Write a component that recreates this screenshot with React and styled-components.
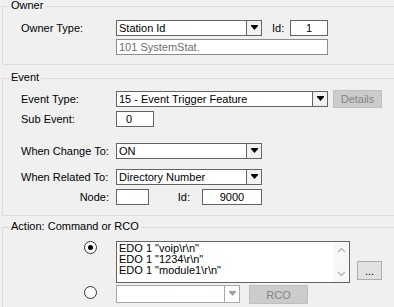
import React from "react";
import styled, { createGlobalStyle } from "styled-components";

const Global = createGlobalStyle`
  html, body { margin: 0; padding: 0; background: #f0f0f0; }
  body { font-family: "Liberation Sans", Arial, sans-serif; font-size: 11px; color: #000; overflow: hidden; }
  #root { width: 394px; height: 307px; overflow: hidden; }
`;

const Page = styled.div`
  display: flex;
  flex-direction: column;
  padding: 6px 0 0 2px;
`;

const Group = styled.div`
  position: relative;
  border: 1px solid #dcdcdc;
  border-right: none;
  margin-right: -20px;
  margin-top: ${(p) => p.$mt || 0}px;
  padding: ${(p) => p.$pt}px 0 ${(p) => p.$pb}px 18px;
  display: flex;
  flex-direction: column;
`;

const GroupTitle = styled.div`
  position: absolute;
  top: -8px;
  left: 6px;
  padding: 0 2px;
  line-height: 13px;
  background: #f0f0f0;
`;

const Row = styled.div`
  display: flex;
  align-items: ${(p) => p.$align || "center"};
  height: ${(p) => p.$h || 16}px;
  margin-top: ${(p) => p.$mt || 0}px;
`;

const Label = styled.div`
  width: ${(p) => p.$w || 95}px;
  flex: none;
  box-sizing: border-box;
  text-align: ${(p) => (p.$right ? "right" : "left")};
  padding-right: ${(p) => p.$pr || 0}px;
  padding-left: ${(p) => p.$pl || 0}px;
  line-height: 13px;
  white-space: nowrap;
`;

const Field = styled.div`
  box-sizing: border-box;
  width: ${(p) => p.$w}px;
  height: ${(p) => p.$h || 16}px;
  flex: none;
  background: #fff;
  border: 1px solid ${(p) => (p.$disabled ? "#8c8c8c" : "#646464")};
  color: ${(p) => (p.$disabled ? "#6d6d6d" : "#000")};
  line-height: 14px;
  padding-left: ${(p) => p.$pl ?? 2}px;
  text-align: ${(p) => (p.$center ? "center" : "left")};
  white-space: nowrap;
  overflow: hidden;
`;

const ComboBox = styled.div`
  box-sizing: border-box;
  width: ${(p) => p.$w}px;
  height: ${(p) => p.$h || 16}px;
  flex: none;
  display: flex;
  background: #fff;
  border: 1px solid ${(p) => (p.$disabled ? "#a8a8a8" : "#646464")};
`;

const ComboText = styled.div`
  flex: 1;
  padding-left: 2px;
  line-height: 14px;
  white-space: nowrap;
  overflow: hidden;
`;

const ComboArrow = styled.div`
  width: 14px;
  flex: none;
  display: flex;
  align-items: center;
  justify-content: center;
  border-left: 1px solid ${(p) => (p.$disabled ? "#a8a8a8" : "#646464")};
  background: ${(p) => (p.$disabled ? "#fff" : "#f2f2f2")};
`;

const Button = styled.div`
  box-sizing: border-box;
  width: ${(p) => p.$w}px;
  height: ${(p) => p.$h || 18}px;
  flex: none;
  margin-left: ${(p) => p.$ml || 0}px;
  margin-top: ${(p) => p.$mt || 0}px;
  align-self: ${(p) => p.$self || "auto"};
  display: flex;
  align-items: center;
  justify-content: center;
  background: ${(p) => (p.$disabled ? "#cccccc" : "#e1e1e1")};
  border: 1px solid ${(p) => (p.$disabled ? "#bfbfbf" : "#adadad")};
  color: ${(p) => (p.$disabled ? "#838383" : "#000")};
`;

const IdLabel = styled.div`
  box-sizing: border-box;
  width: ${(p) => p.$w}px;
  padding-left: ${(p) => p.$pl || 0}px;
  text-align: ${(p) => (p.$right ? "right" : "left")};
  padding-right: ${(p) => p.$pr || 0}px;
  flex: none;
  line-height: 13px;
`;

const RadioCell = styled.div`
  width: 95px;
  flex: none;
  box-sizing: border-box;
  padding-left: 63px;
  padding-top: ${(p) => p.$pt || 0}px;
  align-self: flex-start;
`;

const Radio = styled.div`
  box-sizing: border-box;
  width: 13px;
  height: 13px;
  border-radius: 50%;
  border: 1px solid #333;
  background: #fff;
  display: flex;
  align-items: center;
  justify-content: center;
  &::after {
    content: "";
    display: ${(p) => (p.$checked ? "block" : "none")};
    width: 5px;
    height: 5px;
    border-radius: 50%;
    background: #000;
  }
`;

const ListBox = styled.div`
  box-sizing: border-box;
  width: 234px;
  height: 42px;
  flex: none;
  display: flex;
  border: 1px solid #646464;
  background: #fff;
`;

const ListLines = styled.div`
  flex: 1;
  padding: 1px 0 0 2px;
  line-height: 11px;
  white-space: nowrap;
  overflow: hidden;
`;

const ScrollBar = styled.div`
  width: 16px;
  flex: none;
  display: flex;
  flex-direction: column;
  justify-content: space-between;
  align-items: center;
  padding: 5px 0 5px;
  background: #f7f7f7;
`;

const Arrow = ({ disabled }) => (
  <svg width="7" height="6" viewBox="0 0 7 6">
    <polygon points="0,0 7,0 7,1 3.5,5 0,1" fill={disabled ? "#a0a0a0" : "#000"} />
  </svg>
);

const Chevron = ({ up }) => (
  <svg width="9" height="6" viewBox="0 0 9 6">
    <polyline
      points={up ? "1,5 4.5,1.5 8,5" : "1,1 4.5,4.5 8,1"}
      fill="none"
      stroke="#b0b0b0"
      strokeWidth="1.2"
    />
  </svg>
);

const Combo = ({ w, h, text, disabled }) => (
  <ComboBox $w={w} $h={h} $disabled={disabled}>
    <ComboText>{text}</ComboText>
    <ComboArrow $disabled={disabled}>
      <Arrow disabled={disabled} />
    </ComboArrow>
  </ComboBox>
);

export default function App() {
  return (
    <>
      <Global />
      <Page>
        <Group $pt={13} $pb={9}>
          <GroupTitle>Owner</GroupTitle>
          <Row>
            <Label>Owner Type:</Label>
            <Combo w={146} text="Station Id" />
            <IdLabel $w={28} $pl={10}>Id:</IdLabel>
            <Field $w={38} $center $pl={0}>1</Field>
          </Row>
          <Row $mt={3}>
            <Label />
            <Field $w={212} $disabled>101 SystemStat.</Field>
          </Row>
        </Group>

        <Group $mt={13} $pt={11} $pb={10}>
          <GroupTitle>Event</GroupTitle>
          <Row $h={18}>
            <Label>Event Type:</Label>
            <Combo w={212} text="15 - Event Trigger Feature" />
            <Button $w={49} $ml={5} $disabled>Details</Button>
          </Row>
          <Row $mt={3}>
            <Label>Sub Event:</Label>
            <Field $w={38} $pl={9}>0</Field>
          </Row>
          <Row $mt={16}>
            <Label $pl={0}>When Change To:</Label>
            <Combo w={146} text="ON" />
          </Row>
          <Row $mt={10}>
            <Label>When Related To:</Label>
            <Combo w={146} text="Directory Number" />
          </Row>
          <Row $mt={4}>
            <Label $right $pr={7}>Node:</Label>
            <Field $w={33} />
            <IdLabel $w={53} $right $pr={12}>Id:</IdLabel>
            <Field $w={60} $center $pl={0}>9000</Field>
          </Row>
        </Group>

        <Group $mt={11} $pt={13} $pb={20}>
          <GroupTitle>Action: Command or RCO</GroupTitle>
          <Row $h={42} $align="flex-start">
            <RadioCell>
              <Radio $checked />
            </RadioCell>
            <ListBox>
              <ListLines>
                <div>{'EDO 1 "voip\\r\\n"'}</div>
                <div>{'EDO 1 "1234\\r\\n"'}</div>
                <div>{'EDO 1 "module1\\r\\n"'}</div>
              </ListLines>
              <ScrollBar>
                <Chevron up />
                <Chevron />
              </ScrollBar>
            </ListBox>
            <Button $w={25} $h={19} $ml={7} $mt={20}>...</Button>
          </Row>
          <Row $h={18} $mt={2} $align="flex-start">
            <RadioCell $pt={1}>
              <Radio />
            </RadioCell>
            <Combo w={124} h={18} text="" disabled />
            <Button $w={59} $h={19} $ml={9} $disabled>RCO</Button>
          </Row>
        </Group>
      </Page>
    </>
  );
}
